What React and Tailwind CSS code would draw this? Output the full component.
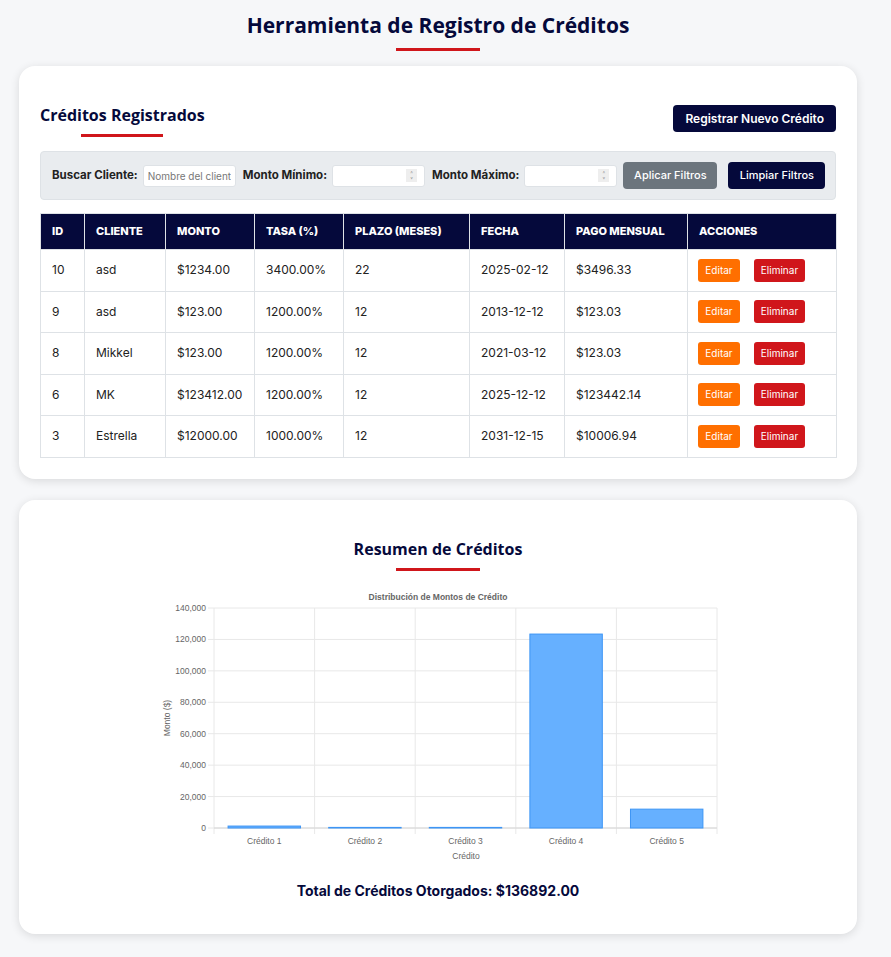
import React from "react";

const creditos = [
  { id: 10, cliente: "asd", monto: "$1234.00", tasa: "3400.00%", plazo: 22, fecha: "2025-02-12", pago: "$3496.33" },
  { id: 9, cliente: "asd", monto: "$123.00", tasa: "1200.00%", plazo: 12, fecha: "2013-12-12", pago: "$123.03" },
  { id: 8, cliente: "Mikkel", monto: "$123.00", tasa: "1200.00%", plazo: 12, fecha: "2021-03-12", pago: "$123.03" },
  { id: 6, cliente: "MK", monto: "$123412.00", tasa: "1200.00%", plazo: 12, fecha: "2025-12-12", pago: "$123442.14" },
  { id: 3, cliente: "Estrella", monto: "$12000.00", tasa: "1000.00%", plazo: 12, fecha: "2031-12-15", pago: "$10006.94" },
];

const montos = [1234, 123, 123, 123412, 12000];

const headFont = { fontFamily: '"Open Sans", "Noto Sans", sans-serif' };

// simple bar chart, drawn by hand
const BarChart = () => {
  const left = 54;
  const right = 557;
  const top = 20;
  const bottom = 240;
  const h = bottom - top;
  const catW = (right - left) / 5;
  const ticks = [0, 20000, 40000, 60000, 80000, 100000, 120000, 140000];
  const axisFont = '"Liberation Sans", Arial, sans-serif';

  return (
    <svg width="580" height="276" viewBox="0 0 580 276" className="block">
      <text x="278" y="12" textAnchor="middle" fontSize="8.5" fontWeight="bold" fill="#666" fontFamily={axisFont}>
        Distribución de Montos de Crédito
      </text>
      {ticks.map((t) => {
        const y = bottom - (t / 140000) * h;
        return (
          <g key={t}>
            <line x1={left - 6} x2={right} y1={y} y2={y} stroke="#e8e8e8" strokeWidth="1" />
            <text x={left - 8} y={y + 3} textAnchor="end" fontSize="8.5" fill="#666" fontFamily={axisFont}>
              {t.toLocaleString("en-US")}
            </text>
          </g>
        );
      })}
      {[0, 1, 2, 3, 4, 5].map((i) => (
        <line
          key={i}
          x1={left + i * catW}
          x2={left + i * catW}
          y1={top}
          y2={bottom + 6}
          stroke="#e8e8e8"
          strokeWidth="1"
        />
      ))}
      <line x1={left} x2={right} y1={bottom} y2={bottom} stroke="#d6d6d6" strokeWidth="1" />
      {montos.map((m, i) => {
        const bh = Math.max((m / 140000) * h, 0.6);
        const bw = catW * 0.72;
        const x = left + i * catW + (catW - bw) / 2;
        return (
          <g key={i}>
            <rect x={x} y={bottom - bh} width={bw} height={bh} fill="#66b0ff" stroke="#3d95f5" strokeWidth="1" />
            <text x={left + i * catW + catW / 2} y={bottom + 16} textAnchor="middle" fontSize="8.5" fill="#666" fontFamily={axisFont}>
              Crédito {i + 1}
            </text>
          </g>
        );
      })}
      <text x="306" y="271" textAnchor="middle" fontSize="8.5" fill="#666" fontFamily={axisFont}>
        Crédito
      </text>
      <text
        transform="translate(10 130) rotate(-90)"
        textAnchor="middle"
        fontSize="8.5"
        fill="#666"
        fontFamily={axisFont}
      >
        Monto ($)
      </text>
    </svg>
  );
};

const NumberInput = () => (
  <div className="shrink-0 flex items-center justify-end w-[93px] h-[22px] bg-white border border-[#dee2e6] rounded-[3px] pr-[7px]">
    <div className="flex flex-col items-center justify-center w-[11px] h-[13px] bg-[#eeeeee] text-[#999] text-[6px] leading-[6px]">
      <span>˄</span>
      <span>˅</span>
    </div>
  </div>
);

const App = () => {
  return (
    <div
      className="min-h-[957px] bg-[#f6f7f9] pl-[19px] pr-[34px] pt-[10px] pb-[23px] text-[#222]"
      style={{ fontFamily: '"Inter", "Noto Sans", sans-serif' }}
    >
      {/* Page title */}
      <div className="flex flex-col items-center">
        <h1 className="text-[21px] leading-[30px] font-bold text-[#05093b]" style={headFont}>
          Herramienta de Registro de Créditos
        </h1>
        <div className="w-[84px] h-[3px] bg-[#d0161b] mt-[8px]"></div>
      </div>

      {/* Registered credits */}
      <div className="mt-[15px] bg-white rounded-[16px] shadow-[0_2px_10px_rgba(0,0,0,0.12)] px-[21px] pt-[38px] pb-[21px]">
        <div className="flex justify-between items-start">
          <div className="flex flex-col items-center">
            <h2 className="text-[16px] leading-[22px] font-bold text-[#05093b]" style={headFont}>
              Créditos Registrados
            </h2>
            <div className="w-[82px] h-[3px] bg-[#d0161b] mt-[8px]"></div>
          </div>
          <button className="bg-[#05093b] text-white text-[12px] font-semibold h-[27px] px-[12px] rounded-[4px] mt-[1px]">
            Registrar Nuevo Crédito
          </button>
        </div>

        {/* Filters */}
        <div className="mt-[14px] h-[49px] bg-[#e9ecef] border border-[#dee2e6] rounded-[4px] flex items-center px-[11px] text-[11.5px] whitespace-nowrap">
          <label className="shrink-0 font-bold text-[#222] mr-[5px]">Buscar Cliente:</label>
          <input
            type="text"
            placeholder="Nombre del cliente"
            className="shrink-0 w-[93px] h-[22px] bg-white border border-[#dee2e6] rounded-[3px] px-[4px] text-[10px] placeholder-[#777] outline-none"
          />
          <label className="shrink-0 font-bold text-[#222] ml-[7px] mr-[5px]">Monto Mínimo:</label>
          <NumberInput />
          <label className="shrink-0 font-bold text-[#222] ml-[7px] mr-[5px]">Monto Máximo:</label>
          <NumberInput />
          <button className="shrink-0 ml-[6px] w-[94px] h-[27px] bg-[#6c757d] text-white text-[11px] font-medium rounded-[4px]">
            Aplicar Filtros
          </button>
          <button className="shrink-0 ml-[11px] w-[97px] h-[27px] bg-[#05093b] text-white text-[11px] font-medium rounded-[4px]">
            Limpiar Filtros
          </button>
        </div>

        {/* Table */}
        <table className="mt-[13px] w-full table-fixed border-collapse text-[12px]">
          <colgroup>
            <col className="w-[44px]" />
            <col className="w-[81px]" />
            <col className="w-[89px]" />
            <col className="w-[89px]" />
            <col className="w-[126px]" />
            <col className="w-[95px]" />
            <col className="w-[123px]" />
            <col className="w-[149px]" />
          </colgroup>
          <thead>
            <tr className="bg-[#05093b] text-white h-[36px]">
              {["ID", "CLIENTE", "MONTO", "TASA (%)", "PLAZO (MESES)", "FECHA", "PAGO MENSUAL", "ACCIONES"].map((h) => (
                <th key={h} className="border border-[#dee2e6] px-[11px] text-left font-extrabold text-[11px]">
                  {h}
                </th>
              ))}
            </tr>
          </thead>
          <tbody>
            {creditos.map((c) => (
              <tr key={c.id} className="h-[41.5px]">
                <td className="border border-[#dee2e6] px-[11px]">{c.id}</td>
                <td className="border border-[#dee2e6] px-[11px]">{c.cliente}</td>
                <td className="border border-[#dee2e6] px-[11px]">{c.monto}</td>
                <td className="border border-[#dee2e6] px-[11px]">{c.tasa}</td>
                <td className="border border-[#dee2e6] px-[11px]">{c.plazo}</td>
                <td className="border border-[#dee2e6] px-[11px]">{c.fecha}</td>
                <td className="border border-[#dee2e6] px-[11px]">{c.pago}</td>
                <td className="border border-[#dee2e6] px-[10px]">
                  <div className="flex items-center gap-[14px]">
                    <button className="bg-[#ff6f00] text-white text-[10px] w-[42px] h-[23px] rounded-[3px]">Editar</button>
                    <button className="bg-[#d0161b] text-white text-[10px] w-[51px] h-[23px] rounded-[3px]">Eliminar</button>
                  </div>
                </td>
              </tr>
            ))}
          </tbody>
        </table>
      </div>

      {/* Summary */}
      <div className="mt-[21px] bg-white rounded-[16px] shadow-[0_2px_10px_rgba(0,0,0,0.12)] px-[21px] pt-[38px] pb-[33px] flex flex-col items-center">
        <h2 className="text-[16px] leading-[22px] font-bold text-[#05093b]" style={headFont}>
          Resumen de Créditos
        </h2>
        <div className="w-[84px] h-[3px] bg-[#d0161b] mt-[8px]"></div>
        <div className="mt-[17px] pl-[24px]">
          <BarChart />
        </div>
        <p className="mt-[16px] text-[14px] font-bold text-[#05093b]">
          Total de Créditos Otorgados: $136892.00
        </p>
      </div>
    </div>
  );
};

export default App;
